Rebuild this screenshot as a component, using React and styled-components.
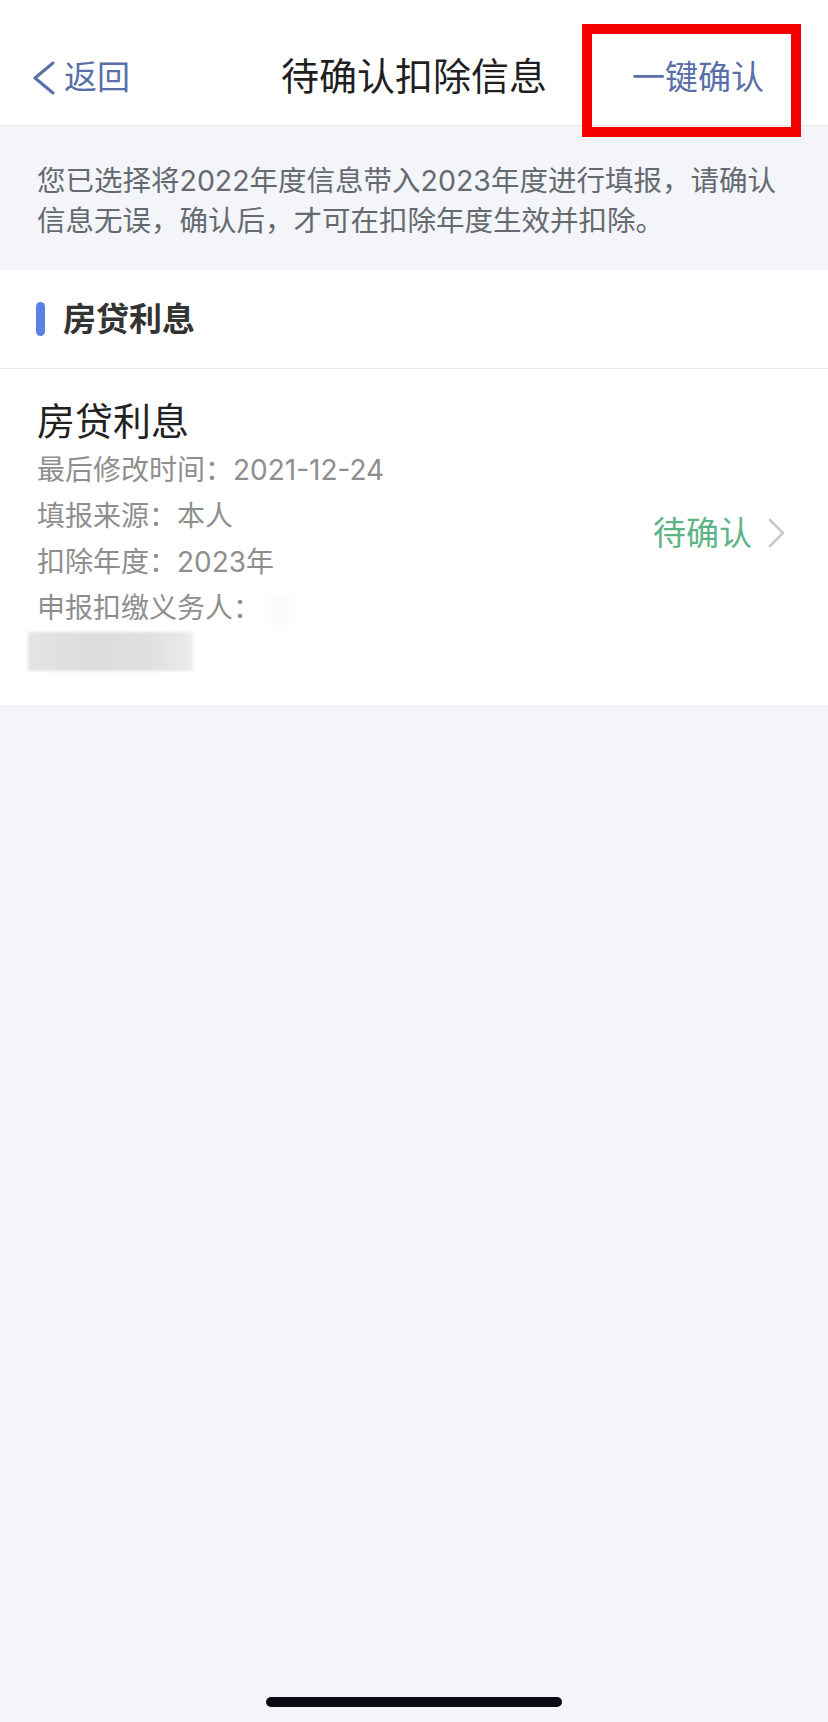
import React from "react";
import styled, { createGlobalStyle } from "styled-components";

const Global = createGlobalStyle`
  html, body {
    margin: 0;
    padding: 0;
    background: #f3f5f9;
  }
  body {
    font-family: "Inter", "Noto Sans CJK SC", sans-serif;
  }
`;

const Page = styled.div`
  position: relative;
  width: 828px;
  min-height: 1722px;
  display: flex;
  flex-direction: column;
  background: #f3f5f9;
  overflow: hidden;
`;

const Header = styled.header`
  height: 95px;
  padding-top: 30px;
  background: #fff;
  border-bottom: 1px solid #e4e6ea;
  display: grid;
  grid-template-columns: 1fr auto 1fr;
  align-items: center;
`;

const Back = styled.div`
  display: flex;
  align-items: center;
  gap: 9px;
  padding-left: 33px;
  color: #5a6fa8;
  font-size: 33px;
  line-height: 1;
`;

const Title = styled.h1`
  margin: 0 0 4px;
  font-size: 38px;
  font-weight: 400;
  color: #1f1f1f;
  line-height: 1;
`;

const Action = styled.div`
  justify-self: end;
  padding-right: 64px;
  font-size: 33px;
  color: #5a6fa8;
  line-height: 1;
`;

const Highlight = styled.div`
  position: absolute;
  left: 582px;
  top: 24px;
  width: 199px;
  height: 93px;
  border: 10px solid #f50000;
  pointer-events: none;
`;

const Notice = styled.p`
  margin: 0;
  padding: 35px 34px 29px 37px;
  font-size: 28.5px;
  line-height: 40px;
  color: #666a70;
`;

const SectionHead = styled.div`
  height: 98px;
  background: #fff;
  border-bottom: 1px solid #e8e9ec;
  display: flex;
  align-items: center;
  padding-left: 36px;
  gap: 18px;
`;

const Bar = styled.span`
  width: 9px;
  height: 34px;
  border-radius: 5px;
  background: #5a82e4;
`;

const SectionTitle = styled.span`
  font-size: 33px;
  font-weight: 700;
  color: #333;
  line-height: 1;
`;

const Item = styled.div`
  background: #fff;
  display: flex;
  align-items: center;
  padding: 26px 43px 34px 37px;
`;

const Info = styled.div`
  flex: 1;
  display: flex;
  flex-direction: column;
`;

const ItemTitle = styled.div`
  font-size: 38px;
  line-height: 52px;
  color: #222;
`;

const Detail = styled.div`
  font-size: 28px;
  line-height: 46px;
  color: #8e8e8e;
  white-space: nowrap;
`;

const Blurred = styled.div`
  margin: 1px 0 0 -9px;
  width: 165px;
  height: 39px;
  background: linear-gradient(90deg, #e4e4e4 0%, #dcdcdc 40%, #e0e0e0 75%, #ececec 100%);
  filter: blur(1.5px);
`;

const Faint = styled.span`
  display: inline-block;
  width: 18px;
  height: 30px;
  margin-left: 10px;
  vertical-align: middle;
  background: #fafafa;
  filter: blur(2px);
`;

const Status = styled.div`
  display: flex;
  align-items: center;
  gap: 16px;
  font-size: 33px;
  color: #5cb487;
  line-height: 1;
`;

const HomeBar = styled.div`
  margin: auto auto 15px;
  width: 296px;
  height: 10px;
  border-radius: 5px;
  background: #0a0a12;
`;

const Chevron = ({ color, width, height, stroke, left }) => (
  <svg width={width} height={height} viewBox={`0 0 ${width} ${height}`}>
    <polyline
      points={
        left
          ? `${width - 2},2 2,${height / 2} ${width - 2},${height - 2}`
          : `2,2 ${width - 2},${height / 2} 2,${height - 2}`
      }
      fill="none"
      stroke={color}
      strokeWidth={stroke}
      strokeLinecap="round"
      strokeLinejoin="round"
    />
  </svg>
);

const details = [
  "最后修改时间：2021-12-24",
  "填报来源：本人",
  "扣除年度：2023年",
];

export default function App() {
  return (
    <>
      <Global />
      <Page>
        <Header>
          <Back>
            <Chevron left color="#5a6fa8" width={22} height={34} stroke={3} />
            <span>返回</span>
          </Back>
          <Title>待确认扣除信息</Title>
          <Action>一键确认</Action>
        </Header>
        <Highlight />
        <Notice>
          您已选择将2022年度信息带入2023年度进行填报，请确认信息无误，确认后，才可在扣除年度生效并扣除。
        </Notice>
        <SectionHead>
          <Bar />
          <SectionTitle>房贷利息</SectionTitle>
        </SectionHead>
        <Item>
          <Info>
            <ItemTitle>房贷利息</ItemTitle>
            {details.map((d) => (
              <Detail key={d}>{d}</Detail>
            ))}
            <Detail>
              申报扣缴义务人：<Faint />
            </Detail>
            <Blurred />
          </Info>
          <Status>
            <span>待确认</span>
            <Chevron color="#c8c8cc" width={17} height={30} stroke={2.5} />
          </Status>
        </Item>
        <HomeBar />
      </Page>
    </>
  );
}
